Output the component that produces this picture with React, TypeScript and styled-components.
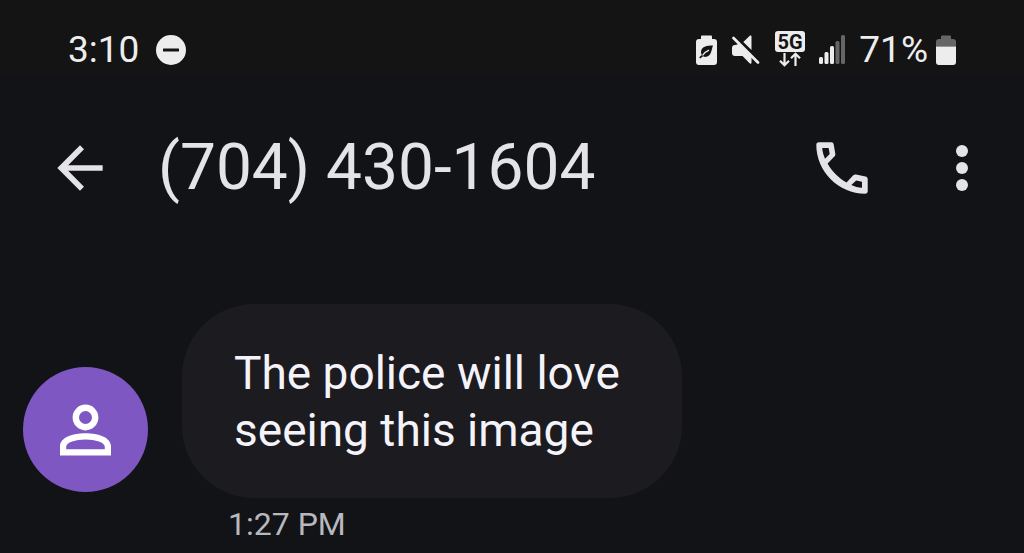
import React from "react";
import styled, { createGlobalStyle } from "styled-components";

const GlobalStyle = createGlobalStyle`
  * { box-sizing: border-box; }
  html { background: #121317; }
  body {
    margin: 0;
    background: #121317;
    color: #e4e3e8;
    font-family: Roboto, "Open Sans", sans-serif;
  }
`;

const Screen = styled.div`
  display: flex;
  flex-direction: column;
  min-height: 100vh;
  overflow: hidden;
`;

const StatusBar = styled.div`
  display: flex;
  align-items: center;
  justify-content: space-between;
  height: 76px;
  padding: 24px 68px 0;
  background: #141414;
  color: #ededed;
`;

const StatusGroup = styled.div<{ $gap: number }>`
  display: flex;
  align-items: center;
  gap: ${(p) => p.$gap}px;
`;

const StatusText = styled.span`
  font-size: 37px;
  line-height: 52px;
`;

const Icon = styled.svg`
  display: block;
  flex: none;
  fill: currentColor;
`;

const AppBar = styled.header`
  display: flex;
  align-items: center;
  height: 184px;
  padding: 0 26px 0 44px;
`;

const IconButton = styled.button`
  display: flex;
  align-items: center;
  justify-content: center;
  flex: none;
  width: 72px;
  height: 72px;
  padding: 0;
  border: 0;
  border-radius: 50%;
  background: none;
  color: inherit;
  cursor: pointer;
`;

const Title = styled.h1`
  flex: 1;
  margin: 0;
  padding-left: 42px;
  font-size: 64px;
  font-weight: 400;
  line-height: 72px;
  white-space: nowrap;
`;

const Actions = styled.div`
  display: flex;
  gap: 48px;
`;

const Thread = styled.main`
  padding: 44px 24px 0 23px;
`;

const MessageRow = styled.div`
  display: flex;
  align-items: flex-end;
  gap: 34px;
`;

const Avatar = styled.div`
  display: flex;
  align-items: center;
  justify-content: center;
  flex: none;
  width: 125px;
  height: 125px;
  margin-bottom: 6px;
  border-radius: 50%;
  background: #7e57c2;
  color: #fff;
`;

const Bubble = styled.p`
  max-width: 500px;
  margin: 0;
  padding: 41px 52px 39px;
  border-radius: 72px;
  background: #1c1b20;
  color: #f5f3fa;
  font-size: 46px;
  line-height: 57px;
`;

const Time = styled.time`
  display: block;
  padding-left: 205px;
  color: #b9b8be;
  font-size: 32px;
  line-height: 52px;
`;

const DoNotDisturb = () => (
  <Icon width="30" height="30" viewBox="0 0 30 30" aria-hidden="true">
    <circle cx="15" cy="15" r="15" />
    <rect x="7" y="13.5" width="16" height="3" rx="0.5" fill="#141414" />
  </Icon>
);

const PowerSaving = () => (
  <Icon width="21" height="30" viewBox="0 0 21 30" aria-hidden="true">
    <path d="M6 0.5h9a1 1 0 0 1 1 1V4h2a3 3 0 0 1 3 3v20a3 3 0 0 1-3 3H3a3 3 0 0 1-3-3V7a3 3 0 0 1 3-3h2V1.500a1 1 0 0 1 1-1z" />
    <path
      d="M17 10.500C11 10.500 5 11.500 5 17c0 1.300.3 2.200.8 3l-2.600 2.200 1 1.200L7 21.300c1 .5 2.100.7 3.200.5C15.500 21 15.500 14.500 17 10.500z"
      fill="#141414"
    />
    <path d="M6.500 20.500C8 18 10 16.500 13 15.200" fill="none" stroke="#ededed" strokeWidth="1.300" />
  </Icon>
);

const Muted = () => (
  <Icon width="30" height="30" viewBox="0 0 30 30" aria-hidden="true">
    <path d="M20.500 1.500V15L12.300 7l6.500-6.200c.7-.8 1.700-.4 1.700.7z" />
    <path d="M8 9L20.500 21.500v6c0 1.300-1 1.600-1.900.8L11.500 21H4a3 3 0 0 1-3-3v-5a3 3 0 0 1 3-3z" />
    <path d="M4.500 2L29 26.500" stroke="#141414" strokeWidth="1.500" />
    <path d="M2.500 3L27 27.500" stroke="currentColor" strokeWidth="2.800" strokeLinecap="round" />
  </Icon>
);

const NetworkLabel = styled.text`
  font-size: 20px;
  font-weight: 700;
  text-anchor: middle;
`;

const Network = () => (
  <Icon width="30" height="38" viewBox="0 0 30 38" role="img" aria-label="5G">
    <rect width="30" height="21" rx="3" />
    <NetworkLabel x="15" y="18" fill="#141414">5G</NetworkLabel>
    <path
      d="M9.500 22v12M5 29.700l4.500 4.500 4.500-4.500M20.500 35V23M16 27.300l4.500-4.500 4.500 4.500"
      fill="none"
      stroke="currentColor"
      strokeWidth="2.200"
    />
  </Icon>
);

const Signal = () => (
  <Icon width="26" height="30" viewBox="0 0 26 30" aria-hidden="true">
    <rect x="0" y="22" width="4" height="7" rx="1.500" />
    <rect x="5.500" y="17" width="4" height="12" rx="1.500" />
    <rect x="11" y="11" width="4" height="18" rx="1.500" />
    <g fill="#666">
      <rect x="16.500" y="6" width="4" height="23" rx="1.500" />
      <rect x="22" y="0" width="4" height="29" rx="1.500" />
    </g>
  </Icon>
);

const Battery = () => (
  <Icon width="20" height="30" viewBox="0 0 20 30" aria-hidden="true">
    <path d="M0 11.500V7a3 3 0 0 1 3-3h2V1.500a1 1 0 0 1 1-1h8a1 1 0 0 1 1 1V4h2a3 3 0 0 1 3 3v4.500z" fill="#666" />
    <path d="M0 11.500h20V27a3 3 0 0 1-3 3H3a3 3 0 0 1-3-3z" />
  </Icon>
);

const BackArrow = () => (
  <Icon width="68" height="68" viewBox="0 0 24 24" aria-hidden="true">
    <path d="M20 11H7.830l5.590-5.590L12 4l-8 8 8 8 1.410-1.410L7.830 13H20v-2z" />
  </Icon>
);

const Phone = () => (
  <Icon width="52" height="52" viewBox="0 0 52 52" aria-hidden="true">
    <path
      fillRule="evenodd"
      d="M2.800 0.300H15.300C16.600 0.300 17.500 1.100 17.700 2.400L19.300 11.800C19.500 13 19.200 13.800 18.400 14.600L11.600 21.500C16 29.500 22.500 36 30.500 40.400L37 33.500C37.900 32.600 38.800 32.200 40 32.500L49.500 34.400C50.900 34.700 51.700 35.600 51.700 37V49.200C51.700 50.800 50.700 51.700 49.200 51.700C22.500 51.700 0.300 29.500 0.300 2.800C0.300 1.300 1.300 0.300 2.800 0.300ZM6.200 6C6.500 9.600 7.500 13.200 9 16.700L13.700 12L12.600 6ZM35.300 42.900C38.600 44.500 42.200 45.500 46 45.800V39.700L40.200 38.400Z"
    />
  </Icon>
);

const More = () => (
  <Icon width="12" height="46" viewBox="0 0 12 46" aria-hidden="true">
    <circle cx="6" cy="6" r="6" />
    <circle cx="6" cy="23" r="6" />
    <circle cx="6" cy="40" r="6" />
  </Icon>
);

const Person = () => (
  <Icon width="52" height="52" viewBox="0 0 52 52" aria-hidden="true">
    <circle cx="25.500" cy="13.500" r="9.700" fill="none" stroke="currentColor" strokeWidth="6.400" />
    <path
      fillRule="evenodd"
      d="M0 51.500V42.500C0 33.500 12.500 29.300 25.500 29.300S51 33.500 51 42.500V51.500ZM6.200 45.300H44.800V42.700C44.800 38.600 35.500 35.500 25.500 35.500S6.200 38.600 6.200 42.700Z"
    />
  </Icon>
);

export default function App() {
  return (
    <Screen>
      <GlobalStyle />
      <StatusBar>
        <StatusGroup $gap={17}>
          <StatusText>3:10</StatusText>
          <DoNotDisturb />
        </StatusGroup>
        <StatusGroup $gap={14}>
          <PowerSaving />
          <Muted />
          <Network />
          <Signal />
          <StatusGroup $gap={8}>
            <StatusText>71%</StatusText>
            <Battery />
          </StatusGroup>
        </StatusGroup>
      </StatusBar>
      <AppBar>
        <IconButton aria-label="Back">
          <BackArrow />
        </IconButton>
        <Title>(704) 430-1604</Title>
        <Actions>
          <IconButton aria-label="Call">
            <Phone />
          </IconButton>
          <IconButton aria-label="More options">
            <More />
          </IconButton>
        </Actions>
      </AppBar>
      <Thread>
        <MessageRow>
          <Avatar>
            <Person />
          </Avatar>
          <Bubble>The police will love seeing this image</Bubble>
        </MessageRow>
        <Time>1:27 PM</Time>
      </Thread>
    </Screen>
  );
}
